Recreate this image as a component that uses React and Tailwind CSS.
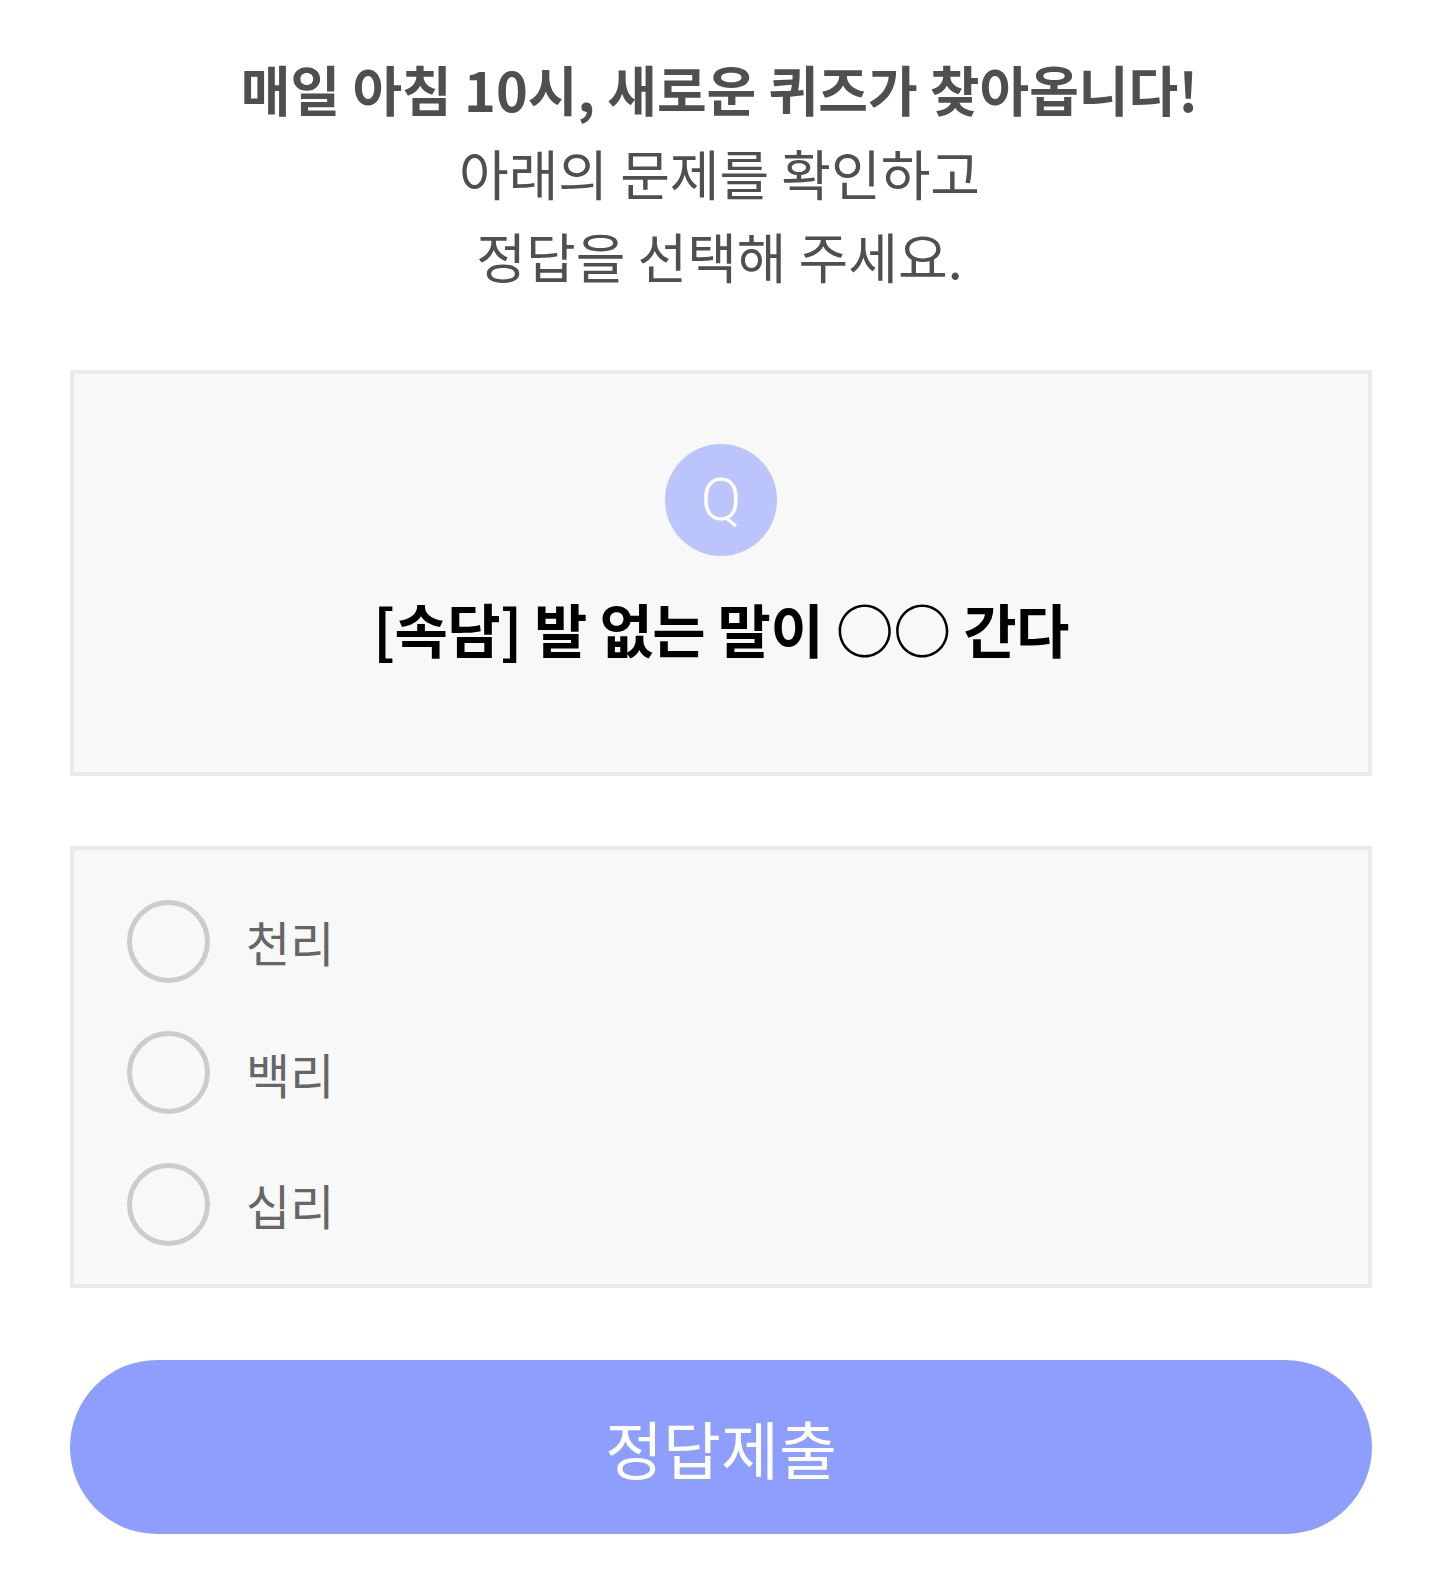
import React from "react";

const font = { fontFamily: '"Noto Sans CJK KR", "Noto Sans", sans-serif' };

function Radio({ label }) {
  return (
    <label className="flex items-center">
      <span className="block w-[83px] h-[83px] rounded-full border-[5px] border-[#cccccc] box-border shrink-0" />
      <span className="ml-[36px] text-[48px] leading-[60px] text-[#666666]">{label}</span>
    </label>
  );
}

export default function App() {
  return (
    <div
      className="w-full min-h-[1587px] bg-white font-['Noto_Sans_CJK_KR','Noto_Sans',sans-serif] pt-[47px] pb-[52px]"
      style={font}
    >
      <div className="text-center text-[54px] leading-[83.5px] text-[#4f4f4f]">
        <p className="font-bold">매일 아침 10시, 새로운 퀴즈가 찾아옵니다!</p>
        <p>아래의 문제를 확인하고</p>
        <p>정답을 선택해 주세요.</p>
      </div>

      <div className="ml-[70px] mr-[67px] mt-[72px] border-4 border-[#ebebeb] bg-[#f8f8f8] pt-[70px] pb-[104px] flex flex-col items-center">
        <div className="w-[112px] h-[112px] rounded-full bg-[#bcc5fb] flex items-center justify-center">
          <span className="text-white text-[60px] leading-none font-light font-['Roboto',sans-serif]">Q</span>
        </div>
        <p className="mt-[32px] text-[58px] leading-[80px] font-bold text-black tracking-[-0.01em]">
          [속담] 발 없는 말이 ○○ 간다
        </p>
      </div>

      <div className="ml-[70px] mr-[67px] mt-[70px] border-4 border-[#ebebeb] bg-[#f8f8f8] pt-[50px] pb-[38px] pl-[53px] flex flex-col gap-[48.5px]">
        <Radio label="천리" />
        <Radio label="백리" />
        <Radio label="십리" />
      </div>

      <div className="ml-[70px] mr-[67px] mt-[72px]">
        <button className="h-[174px] w-full rounded-full bg-[#8e9efc] text-white text-[63px] leading-none flex items-center justify-center">
          정답제출
        </button>
      </div>
    </div>
  );
}
